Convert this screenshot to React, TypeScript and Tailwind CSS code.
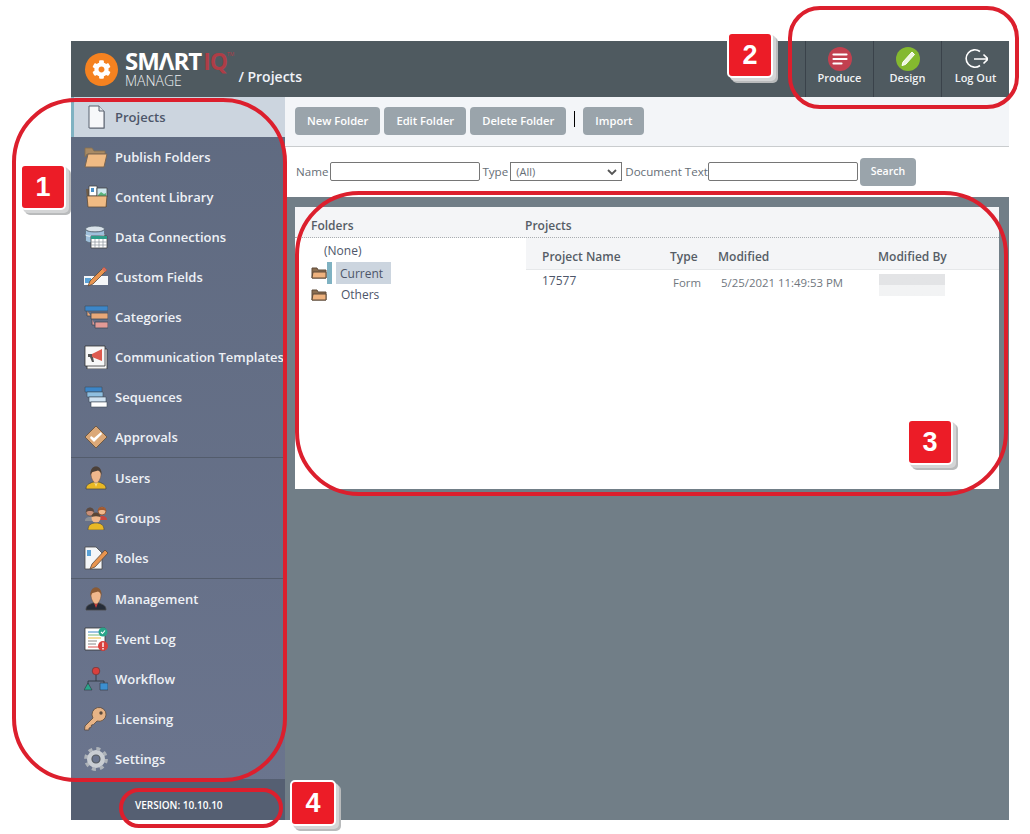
import type { ReactNode } from "react";
import { FaCog } from "react-icons/fa";

const Svg = ({ children }: { children: ReactNode }) => (
  <svg viewBox="0 0 24 24" className="h-6 w-6 shrink-0" aria-hidden>
    {children}
  </svg>
);

const FolderOpen = () => (
  <Svg>
    <path d="M1 3h7l2 3h11v3H3L1 12z" fill="#a98a64" stroke="#85704f" strokeWidth=".8" />
    <path d="M4 9h19l-3 13H1z" fill="#f0bb84" stroke="#7a6550" strokeWidth="1" />
  </Svg>
);

const Person = ({ hair, skin, body, tie }: { hair: string; skin: string; body: string; tie: string }) => (
  <Svg>
    <path d="M2 23c0-4 2-5 7-7h6c5 2 7 3 7 7z" fill={body} stroke="#4a4a4a" strokeWidth=".8" />
    <path d="M10 16h4l-2 5z" fill={tie} />
    <path d="M7 8c0-4 2-7 5-7s5 3 5 7c0 5-3 9-5 9s-5-4-5-9z" fill={skin} stroke="#6b4f3a" strokeWidth=".5" />
    <path d="M6.500 9C6 3 9 .5 12 .5s6 2.500 5.500 8.500c-.5-2.500-1.500-3.500-3.500-4.500-2 1-5.500 1-6 2z" fill={hair} />
  </Svg>
);

const icons: Record<string, ReactNode> = {
  Projects: (
    <Svg>
      <path d="M6 2h10l5 5v17H6z" fill="#9aa3ad" />
      <path d="M5 1h10l5 5v17H5z" fill="#f7f8fa" stroke="#59616e" strokeWidth="1" />
      <path d="M15 1v5h5" fill="#dfe3e8" stroke="#59616e" strokeWidth="1" />
    </Svg>
  ),
  "Publish Folders": <FolderOpen />,
  "Content Library": (
    <Svg>
      <path d="M2 4h3v6h18v12H4z" fill="#6d5b47" />
      <path d="M5 1h8v10H5z" fill="#fff" stroke="#444" strokeWidth=".8" />
      <path d="M7 3h3v4H7z" fill="#4a90c8" />
      <path d="M13 3h10v9H13z" fill="#cfe6ee" stroke="#444" strokeWidth=".8" />
      <path d="M14 10l3-3 3 2 2-1v3h-8z" fill="#59b27a" />
      <path d="M3 11h20l-1 11H4z" fill="#f0bb84" stroke="#5f4e3d" strokeWidth=".8" />
    </Svg>
  ),
  "Data Connections": (
    <Svg>
      <ellipse cx="11" cy="4" rx="9.500" ry="3" fill="#d9e2ea" stroke="#5d6b78" strokeWidth=".8" />
      <path d="M1.500 4v11c0 2 4 3 9.500 3s9.500-1 9.500-3V4c0 2-4 3-9.500 3S1.500 6 1.500 4z" fill="#9fc0dc" stroke="#5d6b78" strokeWidth=".8" />
      <path d="M1.500 10c2 2 17 2 19 0" fill="none" stroke="#eaf2f7" strokeWidth="1" />
      <path d="M7 11h16v12H7z" fill="#fff" stroke="#444" strokeWidth=".8" />
      <path d="M7 11h16v3H7z" fill="#2e9e8a" />
      <path d="M7 17h16M7 20h16M11 14v9M15 14v9M19 14v9" stroke="#8a949c" strokeWidth=".7" />
    </Svg>
  ),
  "Custom Fields": (
    <Svg>
      <path d="M0 11h24v9H0z" fill="#f4f6f8" />
      <path d="M1 13h6v5H1z" fill="#5aa1d6" />
      <path d="M20 2l3 3L9 19l-5 2 2-5z" fill="#e8944f" stroke="#5a4a3c" strokeWidth=".8" />
      <path d="M18 4l3 3 2-2-3-3z" fill="#d96c5f" />
    </Svg>
  ),
  Categories: (
    <Svg>
      <path d="M1 1h23v5H1z" fill="#3c86c8" stroke="#3d4a58" strokeWidth=".6" />
      <path d="M3 6v5h4M7 8h17v6H7z" fill="#e8a878" stroke="#3d4a58" strokeWidth=".8" />
      <path d="M8 14v6h3M11 17h13v6H11z" fill="#e29a96" stroke="#3d4a58" strokeWidth=".8" />
    </Svg>
  ),
  "Communication Templates": (
    <Svg>
      <path d="M3 4h20v20H3z" fill="#f5f5f5" stroke="#333" strokeWidth=".8" />
      <path d="M1 1h20v20H1z" fill="#f8f8f8" stroke="#333" strokeWidth=".8" />
      <path d="M8 9l10-5v12L8 12z" fill="#dd5a4e" />
      <path d="M4 9h4v3H4zM6 12h3l1 5H8z" fill="#555" />
    </Svg>
  ),
  Sequences: (
    <Svg>
      <path d="M1 2h17v5H1z" fill="#3c86c8" stroke="#3d4a58" strokeWidth=".6" />
      <path d="M3 7h16v5H3z" fill="#8fbfe0" stroke="#3d4a58" strokeWidth=".6" />
      <path d="M5 12h17v5H5z" fill="#cfe2f1" stroke="#3d4a58" strokeWidth=".6" />
      <path d="M7 17h16v5H7z" fill="#fff" stroke="#3d4a58" strokeWidth=".6" />
    </Svg>
  ),
  Approvals: (
    <Svg>
      <path d="M12 1l11 11-11 11L1 12z" fill="#dba878" stroke="#6f5a45" strokeWidth="1" />
      <path d="M6 13l4 4 8-8-1-2-7 6-3-2z" fill="#fff" />
    </Svg>
  ),
  Users: <Person hair="#4b4038" skin="#f0b88c" body="#e9b824" tie="#f8e08a" />,
  Groups: (
    <Svg>
      <circle cx="6" cy="6" r="4" fill="#c98f78" stroke="#554" strokeWidth=".6" />
      <path d="M2 6c0-6 8-6 8 0-2-1.500-6-1.500-8 0z" fill="#5a4a44" />
      <path d="M1 15c0-3 2-4 5-4s5 1 5 4z" fill="#8a8f96" />
      <circle cx="18" cy="5" r="4" fill="#f0b88c" stroke="#8a4a2a" strokeWidth=".8" />
      <path d="M14 5c0-5 8-5 8 0-2-1.500-6-1.500-8 0z" fill="#a05a30" />
      <path d="M13 14c0-3 2-4 5-4s5 1 5 4z" fill="#c9453f" />
      <circle cx="12" cy="12" r="4.500" fill="#f0b88c" />
      <path d="M7.500 11c0-6 9-6 9 0-3-1-6-1-9 0z" fill="#5a4636" />
      <path d="M4 24c0-5 3-7 8-7s8 2 8 7z" fill="#e9b824" stroke="#4a4a4a" strokeWidth=".6" />
    </Svg>
  ),
  Roles: (
    <Svg>
      <path d="M1 1h11l6 6v16H1z" fill="#f4f6f8" stroke="#4a4a4a" strokeWidth=".8" />
      <path d="M3 4h4v6H3z" fill="#5aa1d6" />
      <path d="M21 4l3 3L11 21l-5 2 2-5z" fill="#e8944f" stroke="#5a4a3c" strokeWidth=".8" />
    </Svg>
  ),
  Management: <Person hair="#8a5a34" skin="#f0b88c" body="#252c38" tie="#cf3d3d" />,
  "Event Log": (
    <Svg>
      <path d="M1 1h20v22H1z" fill="#fff" stroke="#333" strokeWidth=".8" />
      <path d="M4 5h12" stroke="#3c86c8" strokeWidth="1" />
      <path d="M4 8h14" stroke="#79b77a" strokeWidth="1" />
      <path d="M4 11h13" stroke="#e8b93a" strokeWidth="1" />
      <path d="M4 14h9M4 17h8" stroke="#888" strokeWidth="1" />
      <path d="M4 20h11" stroke="#d9534f" strokeWidth="1" />
      <circle cx="19" cy="5" r="4.500" fill="#2aa58a" />
      <path d="M17 5l1.500 1.500L21 3.500" stroke="#fff" strokeWidth="1.100" fill="none" />
      <circle cx="19" cy="19" r="5" fill="#d9403c" />
      <path d="M19 15.500v4.500M19 21v1.500" stroke="#fff" strokeWidth="1.400" />
    </Svg>
  ),
  Workflow: (
    <Svg>
      <path d="M12 8v6M4 19v-5h16v5" fill="none" stroke="#2f3640" strokeWidth=".9" />
      <circle cx="12" cy="4" r="3.800" fill="#d9403c" stroke="#5a2f2f" strokeWidth=".6" />
      <path d="M4 16l4 7H0z" fill="#2aa58a" stroke="#2f3640" strokeWidth=".6" />
      <path d="M16 16h8v7h-8z" fill="#3c8fd0" stroke="#2f3640" strokeWidth=".6" />
    </Svg>
  ),
  Licensing: (
    <Svg>
      <path d="M22 8a7 7 0 1 0-13 3L1 19l-.5 4H5v-2l2-.5.5-2.500 2-.5 3.500-3.500A7 7 0 0 0 22 8z" fill="#e8b486" stroke="#5b4a3c" strokeWidth=".8" />
      <circle cx="17" cy="6" r="1.700" fill="#5b4a3c" />
    </Svg>
  ),
  Settings: (
    <Svg>
      <circle cx="12" cy="12" r="10.300" fill="none" stroke="#aeb3b9" strokeWidth="3.200" strokeDasharray="4.040 4.050" />
      <circle cx="12" cy="12" r="6.500" fill="none" stroke="#c9cdd2" strokeWidth="5" />
      <circle cx="12" cy="12" r="4" fill="none" stroke="#54595f" strokeWidth="1.200" />
    </Svg>
  ),
};

const groups = [
  ["Projects", "Publish Folders", "Content Library", "Data Connections", "Custom Fields", "Categories", "Communication Templates", "Sequences", "Approvals"],
  ["Users", "Groups", "Roles"],
  ["Management", "Event Log", "Workflow", "Licensing", "Settings"],
];

function SideItem({ label }: { label: string }) {
  const active = label === "Projects";
  return (
    <div
      className={
        active
          ? "flex h-10 items-center gap-[7px] border-l-[3px] border-[#7fb2c2] bg-[#ccd5df] pl-[10px] text-[13px] font-semibold whitespace-nowrap text-[#4d5669]"
          : "flex h-10 items-center gap-[7px] pl-[13px] text-[13px] font-semibold whitespace-nowrap text-[#eef1f6]"
      }
    >
      {icons[label]}
      <span className="pt-[2px]">{label}</span>
    </div>
  );
}

function Sidebar() {
  return (
    <aside className="flex w-[214px] shrink-0 flex-col overflow-hidden bg-gradient-to-b from-[#5f6a80] to-[#6b758e]">
      {groups.map((group, i) => (
        <div key={i} className={i > 0 ? "border-t border-[#535c6c]" : ""}>
          {group.map((label) => (
            <SideItem key={label} label={label} />
          ))}
        </div>
      ))}
      <div className="flex h-[41px] items-start bg-[#555f72] pt-[20px] pl-[64px] text-[10px] leading-[13px] font-semibold text-white">
        VERSION: 10.10.10
      </div>
    </aside>
  );
}

function HeaderAction({ label, icon }: { label: string; icon: ReactNode }) {
  return (
    <div className="flex h-14 w-[68px] flex-col items-center border-l border-[#3a424a] pt-[6px] text-[11px] leading-[14px] font-semibold text-[#f0f2f4]">
      <div className="h-6 w-6">{icon}</div>
      {label}
    </div>
  );
}

function Header() {
  return (
    <header className="flex h-14 items-stretch bg-[#4f5a60]">
      <div className="flex items-center pl-[14px]">
        <div className="flex h-[33px] w-[33px] items-center justify-center rounded-full bg-[#f58220]">
          <FaCog className="h-[19px] w-[19px] text-white" />
        </div>
        <div className="ml-[7px] flex flex-col gap-[2px] whitespace-nowrap text-white">
          <div className="flex items-start text-[24px] leading-[20px] font-bold tracking-[-1px]">
            SMΛRT<span className="ml-[2px] text-[23px] text-[#ae3d46]">IQ</span>
            <span className="text-[5px] leading-[6px] font-normal tracking-normal text-[#ae3d46]">TM</span>
          </div>
          <div className="text-[14px] leading-[15px] font-light text-[#eef0f2]">MANAGE</div>
        </div>
        <div className="ml-[4px] self-end pb-[11px] text-[14px] leading-[18px] font-semibold whitespace-nowrap text-[#f0f2f8]">/ Projects</div>
      </div>
      <div className="ml-auto flex">
        <HeaderAction
          label="Produce"
          icon={
            <svg viewBox="0 0 24 24" aria-hidden>
              <circle cx="12" cy="12" r="12" fill="#c2404f" />
              <path d="M5.500 7.500h13M5.500 12h13M5.500 16.500h8" stroke="#fff" strokeWidth="2.200" strokeLinecap="round" />
            </svg>
          }
        />
        <HeaderAction
          label="Design"
          icon={
            <svg viewBox="0 0 24 24" aria-hidden>
              <circle cx="12" cy="12" r="12" fill="#84b92f" />
              <path d="M16 5l2.500 2.500L9.500 17.500 6 18.500l1-3.500z" fill="#eef6dd" stroke="#fff" strokeWidth="1" />
            </svg>
          }
        />
        <HeaderAction
          label="Log Out"
          icon={
            <svg viewBox="0 0 24 24" aria-hidden fill="none" stroke="#fff" strokeWidth="1.600">
              <path d="M16 4.500A8.700 8.700 0 1 0 16 18.500" />
              <path d="M10 12h14M19.500 7.500l4.500 4.500-4.500 4.500" />
            </svg>
          }
        />
      </div>
    </header>
  );
}

function Toolbar() {
  const button = "flex h-7 items-center rounded-[4px] bg-[#9aa4ab] px-3 pt-px text-[11.200px] font-semibold text-white";
  return (
    <div className="flex h-[50px] items-start border-b border-[#c9ccce] bg-[#f3f5f8] pt-[10px] pl-[10px]">
      <div className="flex gap-1">
        <div className={button}>New Folder</div>
        <div className={button}>Edit Folder</div>
        <div className={button}>Delete Folder</div>
      </div>
      <div className="mt-1 mr-2 ml-2 h-4 w-px bg-black" />
      <div className={button}>Import</div>
    </div>
  );
}

function SearchBar() {
  const field = "h-[19px] rounded-[2px] border border-[#767676] bg-white";
  return (
    <div className="flex h-[50px] items-center bg-white pb-[1px] pl-[11px] text-[11.600px] text-[#666e76]">
      <span>Name</span>
      <div className={`ml-[2px] w-[150px] ${field}`} />
      <span className="ml-[2px]">Type</span>
      <div className="ml-[2px] flex h-[19px] w-[112px] items-center justify-between border border-[#767676] bg-white pt-px pr-[3px] pl-[5px] text-[11px]">
        (All)
        <svg viewBox="0 0 12 12" className="h-3 w-3" fill="none" stroke="#555" strokeWidth="1.800" aria-hidden>
          <path d="M2 4l4 4 4-4" />
        </svg>
      </div>
      <span className="ml-[3px]">Document Text</span>
      <div className={`w-[150px] ${field}`} />
      <div className="ml-[2px] flex h-7 w-14 items-center justify-center rounded-[4px] bg-[#9aa4ab] text-[10.500px] font-semibold text-white">Search</div>
    </div>
  );
}

const SmallFolder = () => (
  <svg viewBox="0 0 16 14" className="h-[14px] w-4 shrink-0" aria-hidden>
    <path d="M1 2h5l1 2h8v8H1z" fill="#8a6d50" stroke="#5f4a38" strokeWidth="1" />
    <path d="M2 6h13v6H1z" fill="#eeb27e" stroke="#5f4a38" strokeWidth="1" />
  </svg>
);

function FoldersPane() {
  return (
    <div className="w-[231px] shrink-0 pt-[2px] text-[12px] text-[#4d5669]">
      <div className="h-[22px] pl-[29px] leading-[22px]">(None)</div>
      <div className="flex h-[22px] items-center pl-4">
        <SmallFolder />
        <div className="h-[22px] w-[5px] bg-[#7fb2c2]" />
        <div className="ml-1 h-[22px] bg-[#ccd5df] pr-2 pl-1 leading-[23px]">Current</div>
      </div>
      <div className="flex h-[22px] items-center pl-4">
        <SmallFolder />
        <span className="ml-[14px]">Others</span>
      </div>
    </div>
  );
}

function ProjectsPane() {
  return (
    <div className="flex-1 text-[12px]">
      <div className="grid h-[32px] grid-cols-[128px_48px_160px_1fr] items-center border-b border-[#e6e8ea] bg-[#f4f5f7] pt-[6px] pl-4 font-semibold text-[#565d66]">
        <span>Project Name</span>
        <span>Type</span>
        <span>Modified</span>
        <span>Modified By</span>
      </div>
      <div className="grid grid-cols-[128px_48px_160px_1fr] pl-4">
        <span className="pt-[2px] text-[#4d5669]">17577</span>
        <span className="pt-[4px] pl-[3px] text-[11.400px] text-[#70777e]">Form</span>
        <span className="pt-[4px] pl-[3px] text-[11.400px] text-[#70777e]">5/25/2021 11:49:53 PM</span>
        <div className="mt-[4px] ml-px h-[22px] w-[66px] bg-gradient-to-b from-[#e3e4e6] from-50% to-[#f2f3f4] to-50%" />
      </div>
    </div>
  );
}

function Content() {
  return (
    <div className="flex-1 bg-[#717e87] px-[10px] pt-[10px]">
      <div className="h-[282px] bg-white">
        <div className="flex h-[31px] items-center border-b border-dotted border-[#a9adb1] bg-[#f4f5f7] pt-[8px] pl-4 text-[12px] font-semibold text-[#565d66]">
          <span className="w-[214px]">Folders</span>
          <span>Projects</span>
        </div>
        <div className="flex">
          <FoldersPane />
          <ProjectsPane />
        </div>
      </div>
    </div>
  );
}

// Callout rings and number tags drawn over the screenshot
function Ring({ className }: { className: string }) {
  return <div className={`pointer-events-none absolute border-4 border-[#dc1f2d] ${className}`} />;
}

function Tag({ n, className }: { n: number; className: string }) {
  return (
    <div
      className={`absolute flex h-[46px] w-[46px] items-center justify-center rounded-[5px] border-2 border-white bg-[#ec1c27] font-['Liberation_Sans',sans-serif] text-[27px] leading-none font-bold text-white shadow-[3px_3px_0_#d4d5d6,5px_5px_0_#b9bbbc] ${className}`}
    >
      {n}
    </div>
  );
}

export default function App() {
  return (
    <div className="relative h-[834px] w-[1030px] overflow-hidden bg-white pt-[41px] pr-[21px] pb-[14px] pl-[71px] font-['Open_Sans',sans-serif]">
      <div className="flex h-[779px] flex-col">
        <Header />
        <div className="flex flex-1">
          <Sidebar />
          <main className="flex flex-1 flex-col">
            <Toolbar />
            <SearchBar />
            <Content />
          </main>
        </div>
      </div>
      <Ring className="top-[98px] left-[12px] h-[684px] w-[275px] rounded-[64px]" />
      <Ring className="top-[6px] left-[788px] h-[103px] w-[231px] rounded-[32px]" />
      <Ring className="top-[191px] left-[295px] h-[305px] w-[713px] rounded-[64px]" />
      <Ring className="top-[788px] left-[119px] h-[40px] w-[164px] rounded-[20px]" />
      <Tag n={1} className="top-[164px] left-[20px]" />
      <Tag n={2} className="top-[32px] left-[727px]" />
      <Tag n={3} className="top-[419px] left-[907px]" />
      <Tag n={4} className="top-[780px] left-[290px]" />
    </div>
  );
}
